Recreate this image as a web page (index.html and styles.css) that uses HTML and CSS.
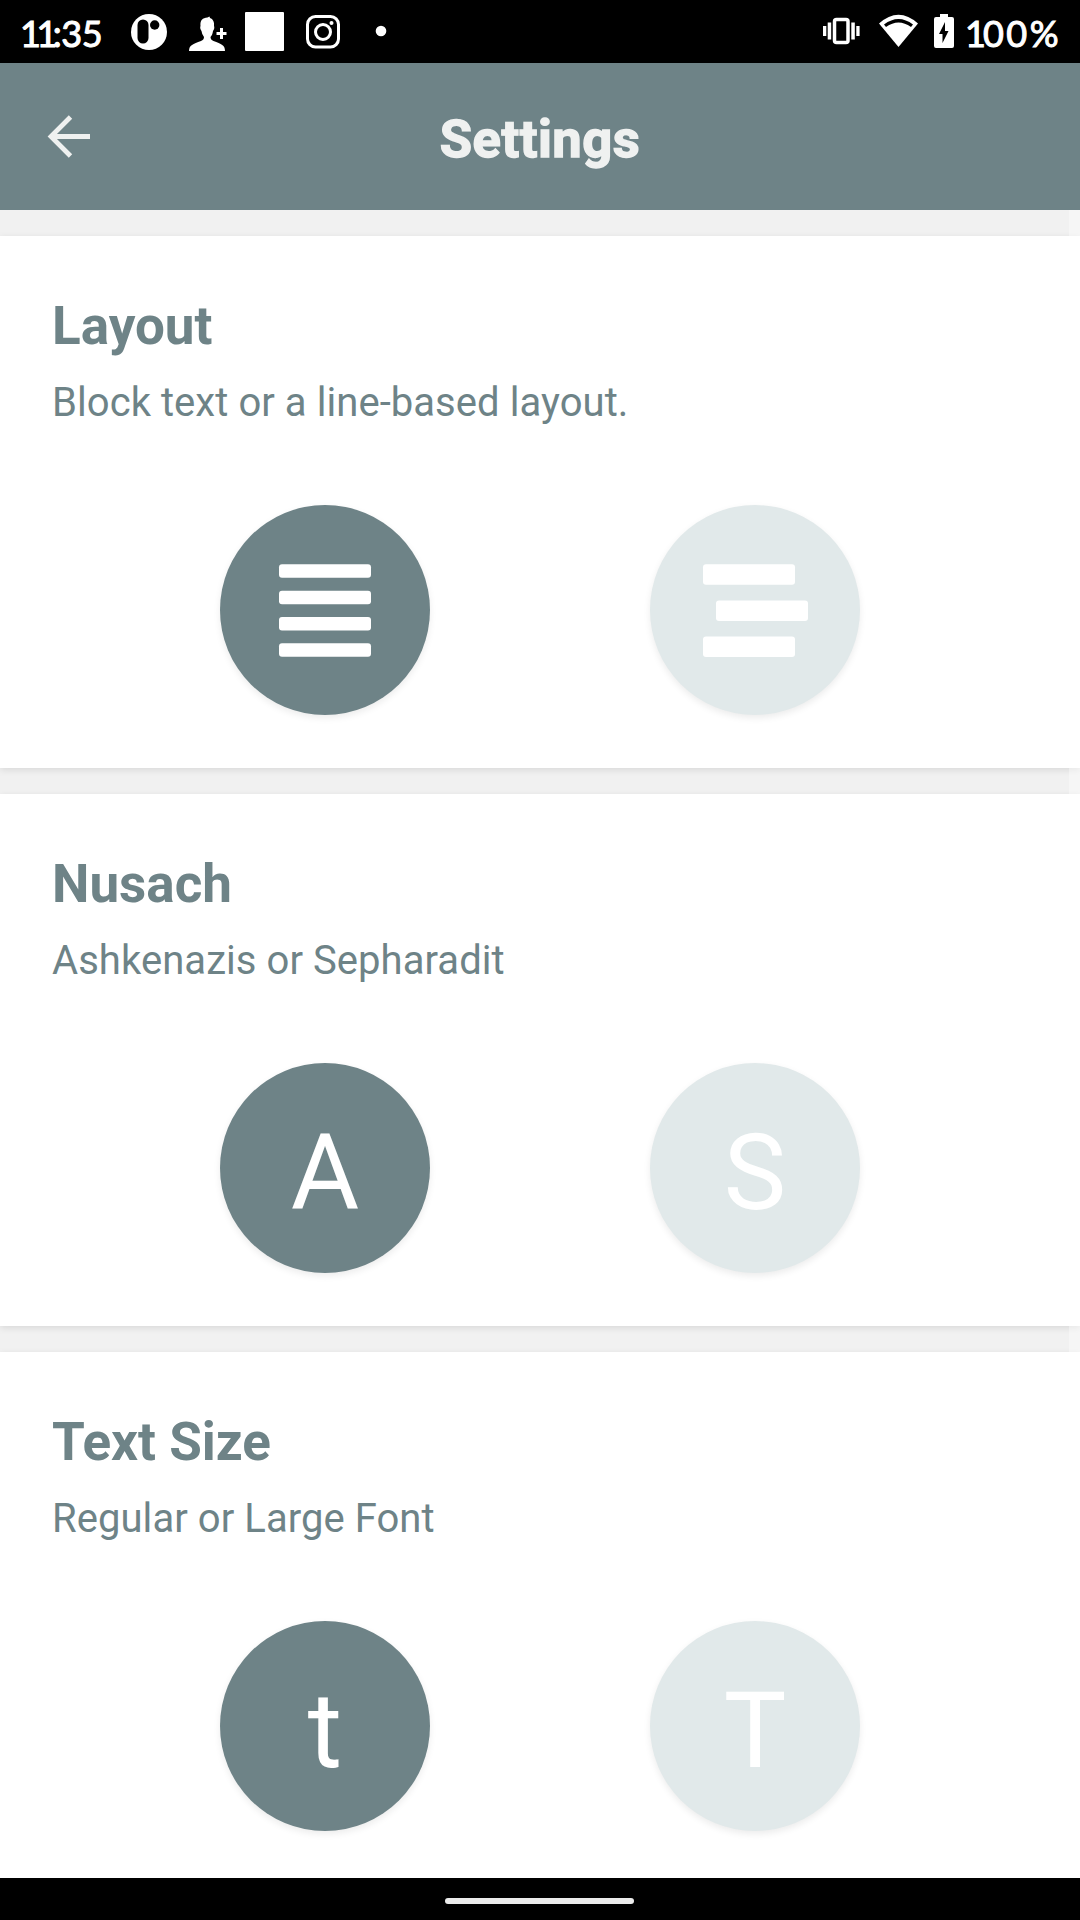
FILE: index.html
```html
<!DOCTYPE html>
<html lang="en">
<head>
<meta charset="utf-8">
<title>Settings</title>
<link rel="stylesheet" href="styles.css">
</head>
<body>
<div class="screen">
  <div class="status">
    <span class="clock"><span class="one">1</span><span class="one">1</span>:35</span>
    <svg class="status-icons" width="270" height="63" viewBox="120 0 270 63" fill="#fff">
      <circle cx="149" cy="32" r="18"/>
      <rect x="137.500" y="19.500" width="11" height="24" rx="5.500" fill="#000"/>
      <circle cx="154.700" cy="25" r="4.700" fill="#000"/>
      <path d="M189 51c0-6 4-7 12-10 2-1 3-2 3-4-2-3-2-4-2.500-6-1.500-2-1.500-4-1-5-.5-6 2-8 7-8.500l2-1 .5 1.500c3 1 4.500 4 4 8 .5 1 .5 3-1 5-.5 3-1 4-2.500 6 0 2 1 3 3 4 8 3 11.500 4 11.500 10z"/>
      <path d="M220 28h3v4h3.500v3H223v4h-3v-4h-3.500v-3h3.500z"/>
      <rect x="245" y="12" width="39" height="39" rx="1"/>
      <rect x="307.500" y="16.500" width="31" height="30.500" rx="8" fill="none" stroke="#fff" stroke-width="3"/>
      <circle cx="323" cy="32" r="7.500" fill="none" stroke="#fff" stroke-width="3"/>
      <circle cx="331.500" cy="23" r="2"/>
      <circle cx="381" cy="31" r="5.300"/>
    </svg>
    <svg class="system-icons" width="140" height="63" viewBox="820 0 140 63" fill="#fff">
      <rect x="834.500" y="19.500" width="13.500" height="23" rx="2" fill="none" stroke="#fff" stroke-width="3.500"/>
      <path d="M823 26h3.300v10H823zM827.700 22.500h3.500v17h-3.500zM851.300 22.500h3.500v17h-3.500zM856.300 26h3.300v10h-3.300z"/>
      <path d="M879 23.500Q898.500 6 918 23.500L898.500 47z"/>
      <path d="M884 24.500Q898.500 13.500 913 24.500L911 27Q898.500 18 886 27z" fill="#000"/>
      <path d="M940 14h8v3h4q2 0 2 2v27q0 2-2 2h-16q-2 0-2-2V19q0-2 2-2h4z"/>
      <path d="M945 22v9h3.500L942.500 43v-9H939z" fill="#000"/>
    </svg>
    <span class="battery"><span class="one">1</span>00%</span>
  </div>
  <header class="bar">
    <svg class="back" width="48" height="48" viewBox="44 112 48 48" fill="none" stroke="#eff1f0" stroke-width="4.800"><path d="M90 136.500H51M70.500 117L51 136.500L70.500 156"/></svg>
    <h1>Settings</h1>
  </header>
  <main class="list">
    <section class="card">
      <h2>Layout</h2>
      <p>Block text or a line-based layout.</p>
      <div class="options">
        <div class="option on"><svg width="210" height="210" fill="#fff"><rect x="59" y="59.300" width="92" height="13.500" rx="3"/><rect x="59" y="85.700" width="92" height="13.500" rx="3"/><rect x="59" y="112" width="92" height="13.500" rx="3"/><rect x="59" y="138.300" width="92" height="13.500" rx="3"/></svg></div>
        <div class="option"><svg width="210" height="210" fill="#fff"><rect x="53" y="59.300" width="92" height="20.500" rx="3"/><rect x="66" y="95.500" width="92" height="20.500" rx="3"/><rect x="53" y="131.500" width="92" height="20.500" rx="3"/></svg></div>
      </div>
    </section>
    <section class="card">
      <h2>Nusach</h2>
      <p>Ashkenazis or Sepharadit</p>
      <div class="options">
        <div class="option on">A</div>
        <div class="option">S</div>
      </div>
    </section>
    <section class="card">
      <h2>Text Size</h2>
      <p>Regular or Large Font</p>
      <div class="options">
        <div class="option on">t</div>
        <div class="option">T</div>
      </div>
    </section>
    <div class="scrollbar"></div>
  </main>
  <div class="nav"><div class="pill"></div></div>
</div>
</body>
</html>
```
FILE: styles.css
```css
* { box-sizing: border-box; }
body { margin: 0; font-family: Roboto, sans-serif; color: #6e8387; }
h1, h2, p { margin: 0; }
.screen { width: 1080px; height: 1920px; display: flex; flex-direction: column; overflow: hidden; }
.status { height: 63px; flex: none; background: #000; color: #fff; display: flex; align-items: center; font: 400 36px/63px Lato, sans-serif; -webkit-text-stroke: 1px #fff; }
.status svg { display: block; flex: none; -webkit-text-stroke: 0; }
.clock { width: 120px; padding-left: 20px; padding-top: 3px; white-space: nowrap; letter-spacing: -0.5px; }
.one { letter-spacing: -4.5px; }
.system-icons { margin-left: auto; }
.battery { width: 120px; padding-left: 5px; padding-top: 3px; white-space: nowrap; letter-spacing: 2.5px; }
.battery .one { letter-spacing: -3px; }
.bar { height: 147px; flex: none; background: #6e8387; color: #eff1f0; display: grid; grid-template-columns: 92px 1fr 92px; align-items: center; }
.back { margin-left: 43.5px; margin-top: -1px; }
h1 { font-size: 52.5px; font-weight: 700; -webkit-text-stroke: 1.4px #eff1f0; letter-spacing: .5px; line-height: 62px; text-align: center; padding-top: 4px; }
.list { flex: 1; min-height: 0; position: relative; background: #f1f1f1; padding-top: 26px; display: flex; flex-direction: column; gap: 26px; overflow: hidden; }
.card { height: 532px; flex: none; background: #fff; padding: 59px 52px 0; box-shadow: 0 2px 7px rgba(0,0,0,.1); }
h2 { font-size: 53px; line-height: 62px; }
p { font-size: 40px; letter-spacing: .06px; line-height: 46px; margin-top: 23px; }
.options { display: flex; gap: 220px; margin-top: 79px; padding-left: 168px; }
.option { width: 210px; height: 210px; flex: none; border-radius: 50%; background: #e1e9ea; color: #fff; font-size: 105px; line-height: 221px; text-align: center; box-shadow: 0 3px 7px rgba(0,0,0,.08); }
.option.on { background: #6e8387; }
.option svg { display: block; }
.scrollbar { position: absolute; top: 0; right: 0; bottom: 0; width: 11px; background: rgba(255,255,255,.4); }
.nav { height: 42px; flex: none; background: #000; display: flex; justify-content: center; align-items: center; padding: 4px 2px 0 0; }
.pill { width: 189px; height: 6px; border-radius: 3px; background: #ebebeb; }
```
